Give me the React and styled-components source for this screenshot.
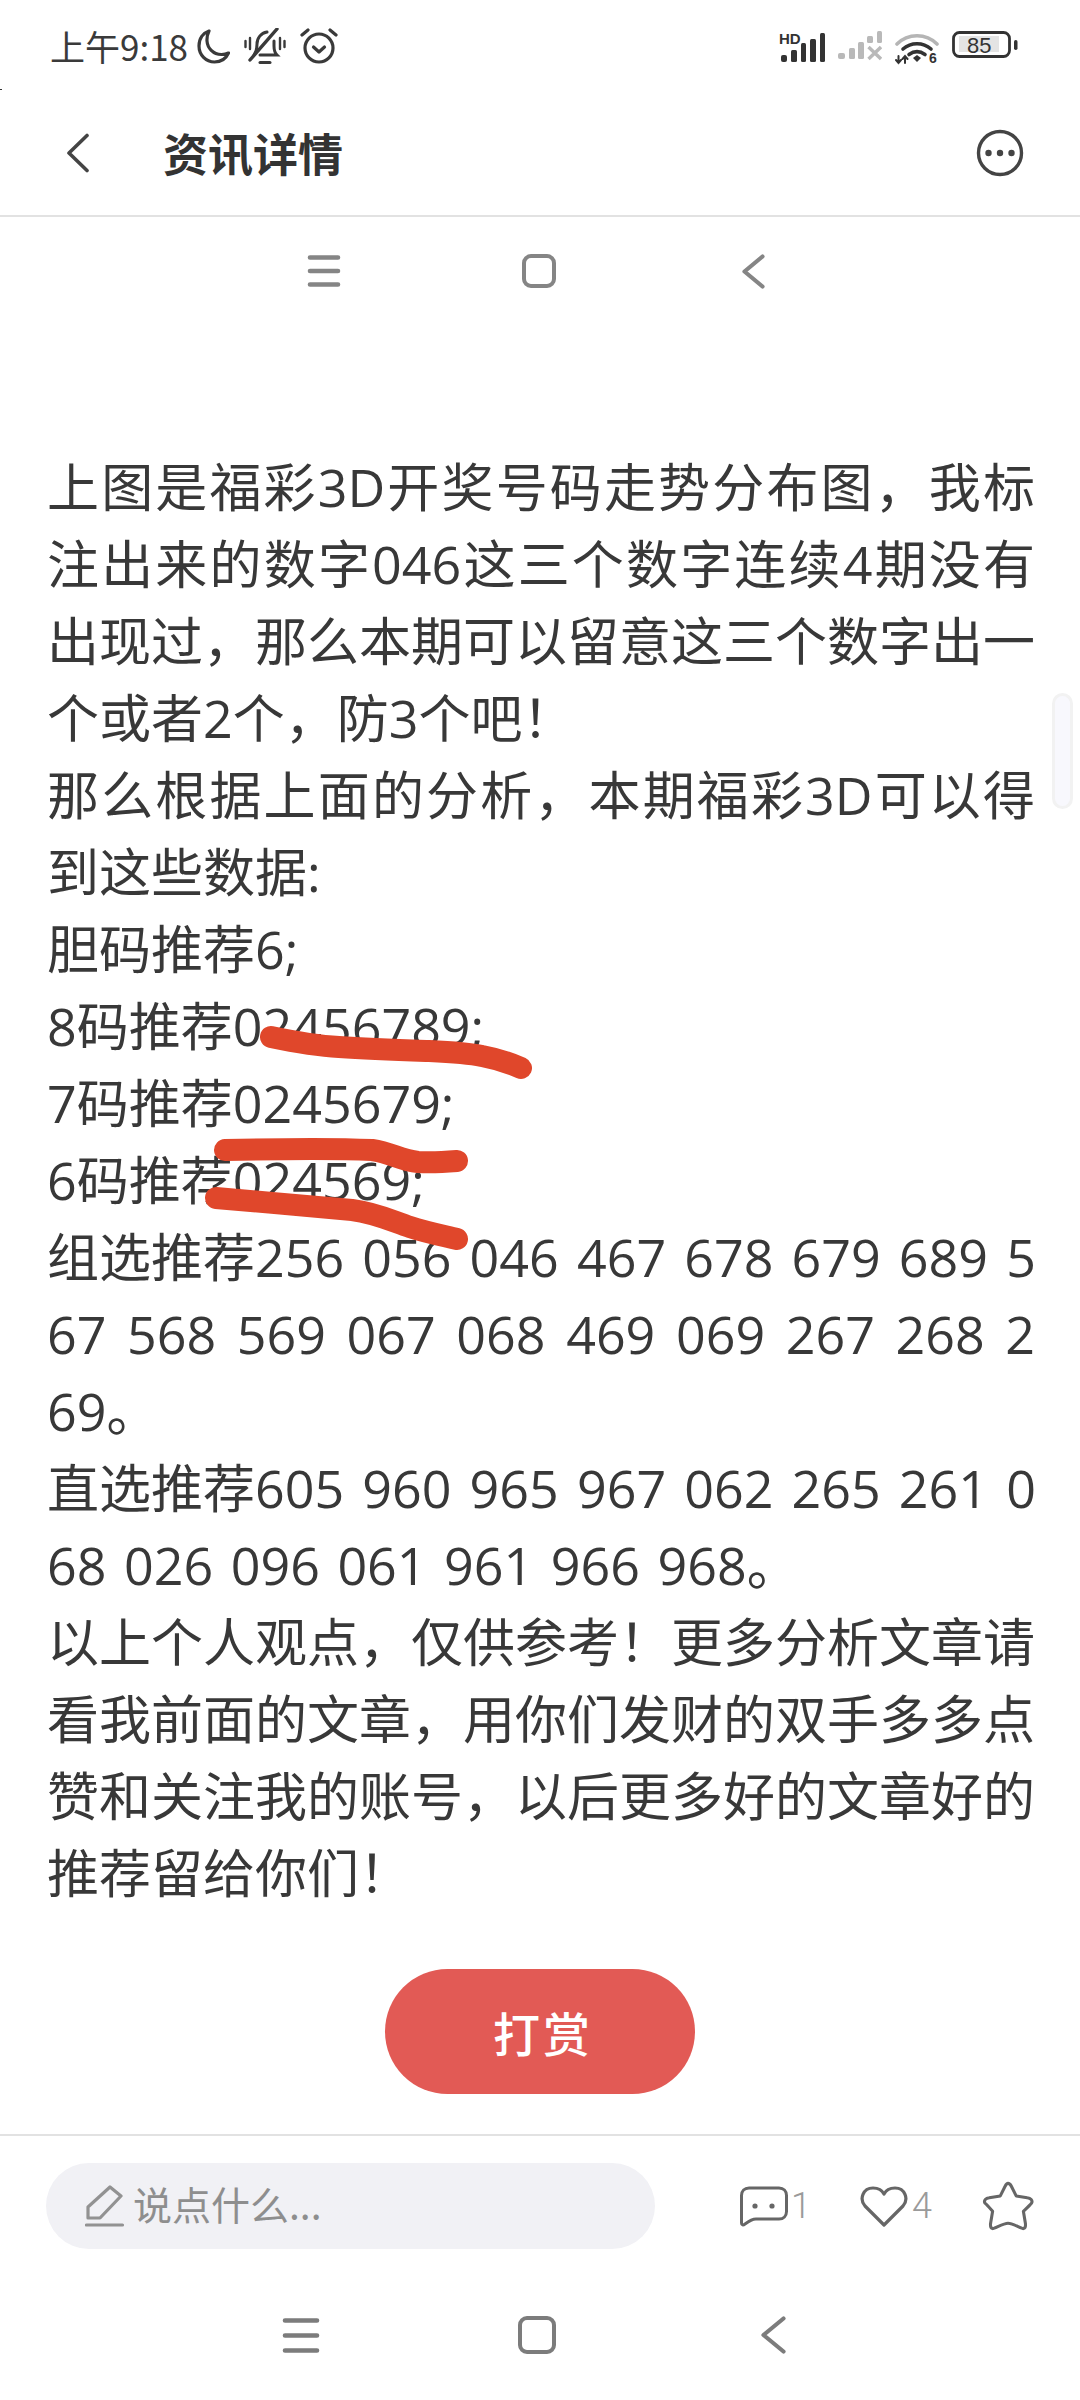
import React from "react";
import styled, { createGlobalStyle } from "styled-components";

const Global = createGlobalStyle`
  html, body { margin: 0; padding: 0; background: #fff; }
  * { box-sizing: border-box; }
`;
const FONT = `"Open Sans", "Noto Sans CJK SC", sans-serif`;
const CJK = `"Noto Sans CJK SC", "Noto Sans", sans-serif`;

const Page = styled.div`
  position: relative;
  width: 1080px;
  height: 2400px;
  background: #fff;
  overflow: hidden;
  font-family: ${FONT};
  display: flex;
  flex-direction: column;
`;
const StatusBar = styled.div`
  height: 78px;
  flex: none;
  padding: 28px 62px 0 50px;
  display: flex;
  justify-content: space-between;
  align-items: flex-start;
`;
const StatusGroup = styled.div`
  display: flex;
  align-items: center;
  gap: ${p => p.$gap}px;
  height: 36px;
`;
const Clock = styled.span`
  font-family: ${CJK};
  font-size: 35px;
  line-height: 36px;
  color: #3a3a3a;
  width: 133px;
  white-space: nowrap;
`;
const Header = styled.header`
  height: 139px;
  flex: none;
  border-bottom: 2px solid #e2e2e2;
  display: flex;
  align-items: center;
  padding: 12px 56px 0 66px;
`;
const Title = styled.h1`
  margin: 0 0 0 73px;
  font-family: ${CJK};
  font-size: 45px;
  font-weight: 700;
  color: #333;
  flex: 1;
`;
const InnerNav = styled.div`
  height: 108px;
  flex: none;
  display: flex;
  justify-content: center;
  align-items: center;
  padding-right: 3px;
`;
const InnerSlot = styled.div`
  width: 215px;
  display: flex;
  justify-content: center;
`;
const Article = styled.article`
  flex: none;
  padding: 123px 0 0 47px;
`;
const Line = styled.div`
  width: 988px;
  font-size: 52px;
  line-height: 77px;
  color: #383838;
  white-space: ${p => (p.$fill ? "pre-wrap" : "pre")};
  text-align: left;
  text-align-last: ${p => (p.$fill ? "justify" : "left")};
  word-spacing: ${p => p.$ws ?? 0}px;
`;
const ButtonRow = styled.div`
  display: flex;
  justify-content: center;
  position: absolute;
  left: 0;
  right: 0;
  top: 1969px;
`;
const Reward = styled.button`
  width: 310px;
  height: 125px;
  border: 0;
  border-radius: 63px;
  background: #e25a55;
  color: #fff;
  font-family: ${CJK};
  font-size: 47px;
  font-weight: 500;
  letter-spacing: 3px;
  padding: 0 0 0 6px;
`;
const Toolbar = styled.footer`
  position: absolute;
  left: 0;
  right: 0;
  top: 2134px;
  height: 115px;
  border-top: 2px solid #e2e2e2;
  display: flex;
  align-items: center;
  padding: 27px 46px 0;
`;
const InputPill = styled.div`
  width: 610px;
  height: 86px;
  background: #f1f1f5;
  border-radius: 43px;
  display: flex;
  align-items: center;
  padding-left: 39px;
  gap: 8px;
  color: #8e8e8e;
  font-family: ${CJK};
  font-size: 39px;
`;
const PillText = styled.span`
  margin-bottom: 6px;
`;
const Action = styled.div`
  display: flex;
  align-items: center;
  gap: ${p => p.$gap ?? 4}px;
  margin-left: ${p => p.$ml}px;
  color: #9a9a9a;
  font-size: 36px;
  font-family: "Roboto", sans-serif;
  font-weight: 300;
`;
const BottomNav = styled.nav`
  position: absolute;
  left: 0;
  right: 0;
  top: 2297px;
  height: 76px;
  display: flex;
  justify-content: center;
  align-items: center;
  padding-right: 6px;
`;
const NavSlot = styled.div`
  width: 236px;
  display: flex;
  justify-content: center;
`;
const ScrollThumb = styled.div`
  position: absolute;
  left: 1052px;
  top: 693px;
  width: 21px;
  height: 116px;
  border-radius: 11px;
  background: #f8f8fd;
  border: 3px solid #f2f2f2;
`;
const EdgeSpeck = styled.div`
  position: absolute;
  left: 0;
  top: 89px;
  width: 2px;
  height: 1px;
  background: #333;
`;
const Scribble = styled.svg`
  position: absolute;
  left: 0;
  top: 0;
  pointer-events: none;
`;

const Moon = () => (
  <svg width="33" height="35" viewBox="0 0 33 35" fill="none" stroke="#3a3a3a" strokeWidth="3.2" strokeLinejoin="round">
    <path d="M12 2C6 4 2 9.500 2 17c0 9 7 16 15.500 16 6.500 0 11.500-3.500 14-9-2 1-4.500 1.500-7 1.500C16 25.500 10.500 19 10 12c-.2-3.500.5-7 2-10Z" />
  </svg>
);
const MutedBell = () => (
  <svg width="42" height="36" viewBox="0 0 42 36" fill="none" stroke="#3a3a3a" strokeWidth="3" strokeLinecap="round">
    <path d="M10 27c2-3 3-5 3-11 0-6 4-11 10-12" />
    <path d="M30 13v5c0 4 1 7 3 9H16" />
    <path d="M6 32 33 1" strokeWidth="3.4" />
    <path d="M16 34.500h10" />
    <path d="M1.500 13v6M6 10v11M36 10v11M40.500 13v6" strokeWidth="2.4" />
  </svg>
);
const Alarm = () => (
  <svg width="38" height="36" viewBox="0 0 38 36" fill="none" stroke="#3a3a3a" strokeWidth="3.2" strokeLinecap="round" strokeLinejoin="round">
    <circle cx="19" cy="20" r="14" />
    <path d="M13.500 19 19 24l5.500-5" />
    <path d="M2 7l6-5M36 7l-6-5" />
  </svg>
);
const SignalHD = () => (
  <svg width="46" height="36" viewBox="0 -4 46 36">
    <text x="0" y="11.500" fontFamily="Liberation Sans, sans-serif" fontWeight="700" fontSize="15" fill="#333">HD</text>
    <g fill="#333">
      <rect x="2" y="23" width="6" height="7" rx="2" />
      <rect x="12" y="18" width="6" height="12" rx="1.500" />
      <rect x="22" y="11" width="5" height="19" rx="1.500" />
      <rect x="31" y="7" width="6" height="23" rx="1.500" />
      <rect x="41" y="1" width="5" height="29" rx="1.500" />
    </g>
  </svg>
);
const SignalX = () => (
  <svg width="44" height="30" viewBox="0 0 44 30" fill="#b9b9b9">
    <rect x="0" y="22" width="7" height="6" rx="2" />
    <rect x="11" y="17" width="6" height="11" rx="1.500" />
    <rect x="20" y="11" width="6" height="17" rx="1.500" />
    <rect x="29" y="5" width="6" height="7" rx="1.500" />
    <rect x="39" y="0" width="5" height="12" rx="1.500" />
    <path d="M30.500 16 43 28M43 16 30.500 28" stroke="#b9b9b9" strokeWidth="3.400" fill="none" />
  </svg>
);
const Wifi = () => (
  <svg width="44" height="40" viewBox="0 -6 44 40" fill="none" strokeLinecap="round">
    <path d="M2 12C13 1 31 1 42 12" stroke="#b5b5b5" strokeWidth="3.600" />
    <path d="M8 17c8-7 20-7 28 0" stroke="#333" strokeWidth="3.600" />
    <path d="M14 22.500c5-3.500 11-3.500 16 0" stroke="#333" strokeWidth="3.600" />
    <path d="m18 26 4-3 4 3-4 4Z" fill="#333" />
    <path d="M3.500 24v7M1 28l2.500 3L6 28M10 31v-7M7.500 27l2.500-3 2.500 3" stroke="#333" strokeWidth="2" />
    <text x="34" y="31" fontFamily="Liberation Sans, sans-serif" fontWeight="700" fontSize="14" fill="#333">6</text>
  </svg>
);
const Battery = () => (
  <svg width="66" height="30" viewBox="0 0 66 30">
    <rect x="1.500" y="1.500" width="56" height="24" rx="6" fill="none" stroke="#333" strokeWidth="2.800" />
    <rect x="7" y="5" width="40" height="16" fill="#e4e4e4" />
    <rect x="62" y="9" width="3.500" height="10" rx="1.700" fill="#333" />
    <text x="15" y="21.500" fontFamily="Liberation Sans, sans-serif" fontSize="22" fill="#333">85</text>
  </svg>
);
const Chevron = () => (
  <svg width="24" height="40" viewBox="0 0 24 40" fill="none" stroke="#444" strokeWidth="3.600" strokeLinecap="round" strokeLinejoin="round">
    <path d="M21 2.500 3 20l18 17.500" />
  </svg>
);
const More = () => (
  <svg width="48" height="48" viewBox="0 0 48 48" fill="none">
    <circle cx="24" cy="24" r="21.500" stroke="#444" strokeWidth="3.400" />
    <circle cx="12.500" cy="24" r="3.200" fill="#444" />
    <circle cx="24" cy="24" r="3.200" fill="#444" />
    <circle cx="35.500" cy="24" r="3.200" fill="#444" />
  </svg>
);
const Menu = ({ w, h, color }) => (
  <svg width={w} height={h} viewBox={`0 0 ${w} ${h}`} stroke={color} strokeWidth="4.600" strokeLinecap="round">
    <path d={`M3 2.500H${w - 3}M3 ${h / 2}H${w - 3}M3 ${h - 2.5}H${w - 3}`} />
  </svg>
);
const Square = ({ w, h, color }) => (
  <svg width={w} height={h} viewBox={`0 0 ${w} ${h}`} fill="none" stroke={color} strokeWidth="4">
    <rect x="2" y="2" width={w - 4} height={h - 4} rx="7" />
  </svg>
);
const NavBack = ({ color, w, h }) => (
  <svg width={w} height={h} viewBox={`0 0 ${w} ${h}`} fill="none" stroke={color} strokeWidth="4.200" strokeLinecap="round" strokeLinejoin="round">
    <path d={`M${w - 2.5} 2.500 2.500 ${h / 2}l${w - 5} ${h / 2 - 2.5}`} />
  </svg>
);
const Pencil = () => (
  <svg width="40" height="42" viewBox="0 0 40 42" fill="none" stroke="#929292" strokeWidth="3.2" strokeLinejoin="round">
    <path d="M25 2 36 11 15 33H3V22Z" />
    <path d="M1.500 40h36" strokeLinecap="round" strokeWidth="3.200" />
  </svg>
);
const Comment = () => (
  <svg width="48" height="41" viewBox="0 0 48 41" fill="none" stroke="#666" strokeWidth="3">
    <path d="M9 2h30c4.500 0 7.500 3 7.500 7.500v16c0 4.500-3 7.500-7.500 7.500H16c-4 0-7 2-11 5-2 1.500-3.500 1-3.500-1V9.500C1.500 5 4.500 2 9 2Z" strokeLinejoin="round" />
    <circle cx="15" cy="20" r="2.600" fill="#666" stroke="none" />
    <circle cx="32" cy="20" r="2.600" fill="#666" stroke="none" />
  </svg>
);
const Heart = () => (
  <svg width="48" height="41" viewBox="0 0 48 41" fill="none" stroke="#666" strokeWidth="3.200" strokeLinejoin="round">
    <path d="M24 39 5 20C-1 13 3 2 13 2c5 0 9 2 11 6 2-4 6-6 11-6 10 0 14 11 8 18Z" />
  </svg>
);
const Star = () => (
  <svg width="52" height="50" viewBox="0 0 54 52" fill="none" stroke="#666" strokeWidth="3.200" strokeLinejoin="round">
    <path d="M27 2.500c1.500 0 2.500 1 3.500 3l5 10 11.500 2c3.500.5 6 2.500 4.500 5.500-1 1.500-8.500 8.500-8.500 8.500l2 12c.5 3 .5 5.500-2 6-2 .3-11-5.500-16-5.500s-14 5.800-16 5.500c-2.500-.5-2.500-3-2-6l2-12S5 24.500 3 23c-1.500-3 1-5 4.500-5.500l11.500-2 5-10c1-2 2-3 3-3Z" />
  </svg>
);

const LINES = [
  { t: "上图是福彩3D开奖号码走势分布图\uFF0C我标", fill: true },
  { t: "注出来的数字046这三个数字连续4期没有", fill: true },
  { t: "出现过\uFF0C那么本期可以留意这三个数字出一", fill: true },
  { t: "个或者2个\uFF0C防3个吧\uFF01" },
  { t: "那么根据上面的分析\uFF0C本期福彩3D可以得", fill: true },
  { t: "到这些数据:" },
  { t: "胆码推荐6;" },
  { t: "8码推荐02456789;" },
  { t: "7码推荐0245679;" },
  { t: "6码推荐024569;" },
  { t: "组选推荐256 056 046 467 678 679 689 5", ws: 4.6 },
  { t: "67 568 569 067 068 469 069 267 268 2", fill: true },
  { t: "69。" },
  { t: "直选推荐605 960 965 967 062 265 261 0", ws: 4.6 },
  { t: "68 026 096 061 961 966 968。", ws: 4 },
  { t: "以上个人观点\uFF0C仅供参考\uFF01更多分析文章请", fill: true },
  { t: "看我前面的文章\uFF0C用你们发财的双手多多点", fill: true },
  { t: "赞和关注我的账号\uFF0C以后更多好的文章好的", fill: true },
  { t: "推荐留给你们\uFF01" },
];

export default function App() {
  return (
    <Page>
      <Global />
      <EdgeSpeck />
      <StatusBar>
        <StatusGroup $gap={14}>
          <Clock>上午9:18</Clock>
          <Moon />
          <MutedBell />
          <Alarm />
        </StatusGroup>
        <StatusGroup $gap={13}>
          <SignalHD />
          <SignalX />
          <Wifi />
          <Battery />
        </StatusGroup>
      </StatusBar>
      <Header>
        <Chevron />
        <Title>资讯详情</Title>
        <More />
      </Header>
      <InnerNav>
        <InnerSlot><Menu w={34} h={32} color="#858585" /></InnerSlot>
        <InnerSlot><Square w={34} h={34} color="#858585" /></InnerSlot>
        <InnerSlot><NavBack color="#858585" w={23} h={35} /></InnerSlot>
      </InnerNav>
      <Article>
        {LINES.map(({ t, fill, ws }, i) => (
          <Line key={i} $fill={fill} $ws={ws}>{t}</Line>
        ))}
      </Article>
      <ButtonRow>
        <Reward>打赏</Reward>
      </ButtonRow>
      <Toolbar>
        <InputPill>
          <Pencil />
          <PillText>说点什么...</PillText>
        </InputPill>
        <Action $ml={85} $gap={3}><Comment />1</Action>
        <Action $ml={49}><Heart />4</Action>
        <Action $ml={50}><Star /></Action>
      </Toolbar>
      <BottomNav>
        <NavSlot><Menu w={38} h={35} color="#7c7c7c" /></NavSlot>
        <NavSlot><Square w={38} h={38} color="#7c7c7c" /></NavSlot>
        <NavSlot><NavBack color="#7c7c7c" w={25} h={38} /></NavSlot>
      </BottomNav>
      <ScrollThumb />
      <Scribble width="1080" height="2400" viewBox="0 0 1080 2400" fill="none" stroke="#e0472b" strokeWidth="22" strokeLinecap="round" strokeLinejoin="round">
        <path d="M271 1037C295 1042 320 1046 339 1047 370 1049 400 1050 429 1051 450 1052 468 1053 482 1056 498 1059 510 1063 521 1068" />
        <path d="M225 1150C270 1149 330 1148 372 1150 392 1153 400 1160 418 1162 432 1163 445 1162 457 1161" />
        <path d="M216 1198C260 1202 310 1206 352 1210 376 1213 392 1221 410 1227 425 1232 440 1235 457 1239" />
      </Scribble>
    </Page>
  );
}
